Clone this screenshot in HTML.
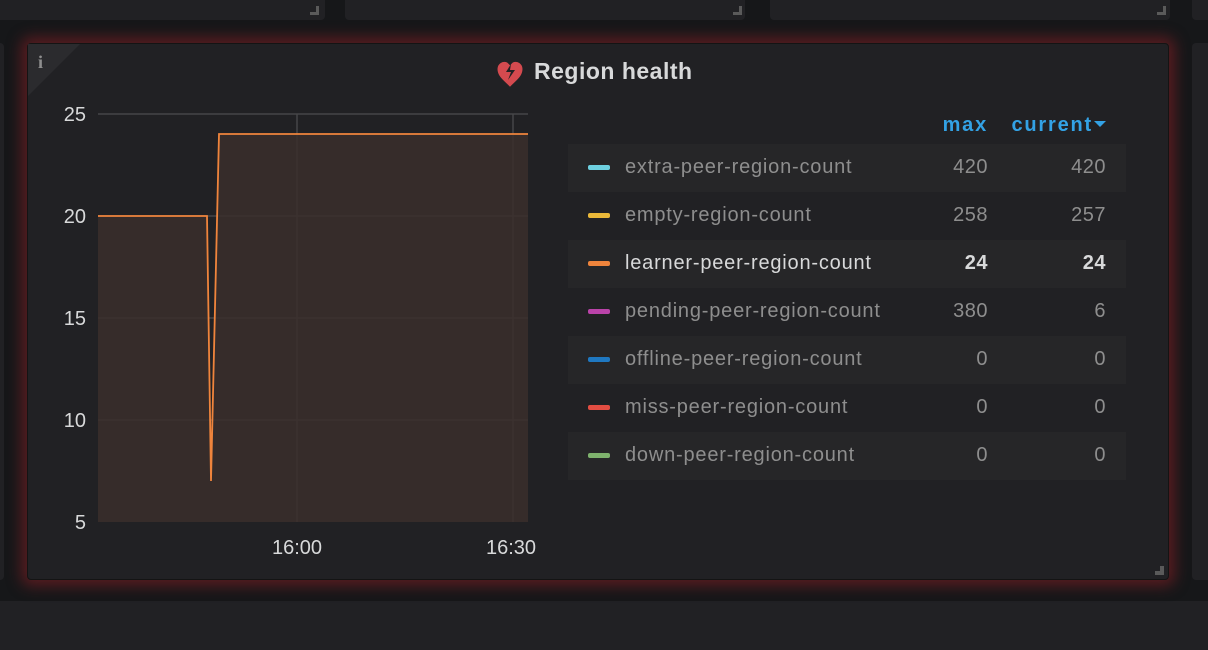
<!DOCTYPE html><html><head><style>
body{margin:0;width:1208px;height:650px;background:#161719;overflow:hidden;position:relative;font-family:"Liberation Sans",sans-serif}
.p{position:absolute;background:#212124;border-radius:4px}
.r{position:absolute;left:568px;width:558px;height:48px;font-size:20px;color:#8e8e8e}
.r.a{background:#262628}
.r .s{position:absolute;left:20px;top:21px;width:22px;height:5px;border-radius:2px}
.r .n{position:absolute;left:57px;top:12px;letter-spacing:0.8px}
.r .m{position:absolute;right:138px;top:12px;letter-spacing:0.5px}
.r .c{position:absolute;right:20px;top:12px;letter-spacing:0.5px}
.r.h{color:#d8d9da}
.r.h .m,.r.h .c{font-weight:bold}
</style></head><body>
<div class="p" style="left:-10px;top:-10px;width:335px;height:30px"></div>
<div class="p" style="left:345px;top:-10px;width:400px;height:30px"></div>
<div class="p" style="left:770px;top:-10px;width:400px;height:30px"></div>
<div class="p" style="left:1192px;top:-10px;width:40px;height:30px"></div>
<div style="position:absolute;left:310px;top:6px;width:9px;height:9px;border-right:3px solid #5a5a5a;border-bottom:3px solid #5a5a5a;box-sizing:border-box;"></div>
<div style="position:absolute;left:733px;top:6px;width:9px;height:9px;border-right:3px solid #5a5a5a;border-bottom:3px solid #5a5a5a;box-sizing:border-box;"></div>
<div style="position:absolute;left:1157px;top:6px;width:9px;height:9px;border-right:3px solid #5a5a5a;border-bottom:3px solid #5a5a5a;box-sizing:border-box;"></div>
<div class="p" style="left:-10px;top:43px;width:14px;height:537px"></div>
<div class="p" style="left:1192px;top:43px;width:40px;height:537px"></div>
<div style="position:absolute;left:0;top:601px;width:1208px;height:49px;background:#212124"></div>
<div class="p" style="left:27px;top:43px;width:1142px;height:537px;border:1px solid #141414;box-sizing:border-box;box-shadow:0 0 14px 6px rgba(110,30,35,.75)"></div>
<svg style="position:absolute;left:0;top:0" width="1208" height="650">
<polygon points="28,44 80,44 28,96" fill="#2b2b2e"/>
<text x="38" y="68" fill="#8e8e8e" font-size="18" font-weight="bold" font-family="Liberation Serif">i</text>
<path d="M510 86 C504 80 498 76 498 69 C498 64 503 61 507 63 L510 66 L513 63 C517 61 522 64 522 69 C522 76 516 80 510 86Z" fill="#d44a4f" stroke="#d44a4f" stroke-width="1"/>
<path d="M511 64 L506 72 L511 72 L508 80 L515 70 L510 70 Z" fill="#212124"/>
<text x="534" y="79" fill="#d8d9da" font-size="23" font-weight="bold" letter-spacing="0.5">Region health</text>
<g stroke="#464648" stroke-width="1.5">
<line x1="98" y1="114" x2="528" y2="114"/><line x1="98" y1="216" x2="528" y2="216"/><line x1="98" y1="318" x2="528" y2="318"/><line x1="98" y1="420" x2="528" y2="420"/>
<line x1="297" y1="114" x2="297" y2="522"/><line x1="513" y1="114" x2="513" y2="522"/>
</g>
<polygon points="98,216 207,216 211,481 219,134 528,134 528,522 98,522" fill="#3a2e2b" opacity="0.85"/>
<polyline points="98,216 207,216 211,481 219,134 528,134" fill="none" stroke="#ef843c" stroke-width="1.8"/>
<g fill="#d8d9da" font-size="20" text-anchor="end">
<text x="86" y="121">25</text><text x="86" y="223">20</text><text x="86" y="325">15</text><text x="86" y="427">10</text><text x="86" y="529">5</text>
</g>
<g fill="#d8d9da" font-size="20" text-anchor="middle"><text x="297" y="554">16:00</text><text x="511" y="554">16:30</text></g>
<text x="988" y="131" fill="#33a2e5" font-size="20" font-weight="bold" text-anchor="end" letter-spacing="1.8">max</text>
<text x="1093" y="131" fill="#33a2e5" font-size="20" font-weight="bold" text-anchor="end" letter-spacing="1.8">current</text>
<path d="M1094 121 L1106 121 L1100 127Z" fill="#33a2e5"/>
<path d="M1164 566 L1164 575 L1155 575 L1155 571 L1160 571 L1160 566Z" fill="#5a5a5a"/>
</svg>
<div class="r a" style="top:144px"><div class="s" style="background:#6ed0e0"></div><span class="n">extra-peer-region-count</span><span class="m">420</span><span class="c">420</span></div>
<div class="r" style="top:192px"><div class="s" style="background:#eab839"></div><span class="n">empty-region-count</span><span class="m">258</span><span class="c">257</span></div>
<div class="r a h" style="top:240px"><div class="s" style="background:#ef843c"></div><span class="n">learner-peer-region-count</span><span class="m">24</span><span class="c">24</span></div>
<div class="r" style="top:288px"><div class="s" style="background:#ba43a9"></div><span class="n">pending-peer-region-count</span><span class="m">380</span><span class="c">6</span></div>
<div class="r a" style="top:336px"><div class="s" style="background:#1f78c1"></div><span class="n">offline-peer-region-count</span><span class="m">0</span><span class="c">0</span></div>
<div class="r" style="top:384px"><div class="s" style="background:#e24d42"></div><span class="n">miss-peer-region-count</span><span class="m">0</span><span class="c">0</span></div>
<div class="r a" style="top:432px"><div class="s" style="background:#7eb26d"></div><span class="n">down-peer-region-count</span><span class="m">0</span><span class="c">0</span></div>
</body></html>
